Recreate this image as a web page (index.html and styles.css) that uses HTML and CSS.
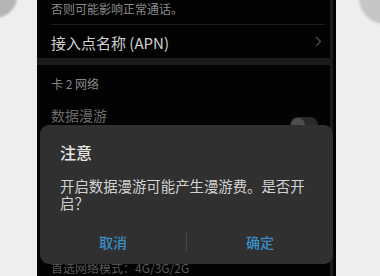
FILE: index.html
```html
<!DOCTYPE html>
<html lang="zh">
<head>
<meta charset="utf-8">
<link rel="stylesheet" href="styles.css">
</head>
<body>
<div class="page">
  <div class="blob blob-left"></div>
  <div class="blob blob-right"></div>
  <div class="gutter"></div>
  <div class="phone">
    <div class="screen">
      <div class="note">否则可能影响正常通话。</div>
      <div class="rule"></div>
      <div class="row apn">
        <span>接入点名称 (APN)</span>
        <svg class="chev" width="7" height="11" viewBox="0 0 7 11"><path d="M1 1 L5.5 5.5 L1 10" fill="none" stroke="#4a4a4a" stroke-width="1.4"/></svg>
      </div>
      <div class="band"></div>
      <div class="header">卡 2 网络</div>
      <div class="row roam">
        <span class="roam-label">数据漫游</span>
        <span class="toggle"><span class="knob"></span></span>
      </div>
      <div class="sub">首选网络模式：4G/3G/2G</div>
    </div>
    <div class="edge"></div>
    <div class="dialog">
      <div class="title">注意</div>
      <div class="message">开启数据漫游可能产生漫游费。是否开启？</div>
      <div class="actions">
        <div class="btn">取消</div>
        <div class="sep"></div>
        <div class="btn">确定</div>
      </div>
    </div>
  </div>
</div>
</body>
</html>
```

FILE: styles.css
```css
* { box-sizing: border-box; }
html, body { margin: 0; padding: 0; }
body {
  background: #efefef;
  font-family: "Noto Sans CJK SC", "Noto Sans", sans-serif;
}
.page {
  position: relative;
  display: flex;
  width: 380px;
  height: 276px;
  overflow: hidden;
  background: #eeeeee;
}
.blob {
  position: absolute;
  border-radius: 50%;
  filter: blur(1px);
}
.blob-left {
  left: -27px;
  top: -26px;
  width: 44px;
  height: 44px;
  background: #b4b4b4;
}
.blob-right {
  left: 359px;
  top: -28px;
  width: 52px;
  height: 52px;
  background: #c6c6c6;
}
.gutter { width: 37px; flex: none; }
.phone {
  position: relative;
  display: flex;
  width: 299px;
  flex: none;
  background: #030303;
}
.screen {
  width: 293px;
  flex: none;
  display: flex;
  flex-direction: column;
}
.edge {
  width: 3px;
  flex: none;
  background: #1b1b1b;
}
.note {
  height: 25px;
  line-height: 17px;
  padding-left: 14px;
  font-size: 12px;
  color: #8a8a8a;
  white-space: nowrap;
}
.rule {
  height: 1px;
  margin: 0 5px 0 14px;
  background: #1d1d1d;
}
.row {
  display: flex;
  justify-content: space-between;
  padding-left: 14px;
}
.apn {
  height: 36px;
  align-items: center;
  padding-top: 2px;
  padding-right: 8px;
  font-size: 15px;
  color: #d0d0d0;
}
.chev { flex: none; margin-top: -2px; }
.band {
  height: 7px;
  background: #1a1a1a;
}
.header {
  height: 38px;
  line-height: 38px;
  padding-left: 14px;
  font-size: 12px;
  color: #888888;
}
.roam {
  height: 30px;
  align-items: flex-start;
  padding-right: 12px;
}
.roam-label {
  line-height: 24px;
  font-size: 14px;
  color: #6a6a6a;
}
.toggle {
  margin-top: 14px;
  width: 28px;
  height: 16px;
  border-radius: 8px;
  background: #2a2a2a;
  display: flex;
  align-items: center;
  padding-left: 1px;
}
.knob {
  width: 14px;
  height: 14px;
  border-radius: 50%;
  background: #4e4e4e;
}
.sub {
  margin-top: 127px;
  line-height: 16px;
  padding-left: 14px;
  font-size: 12px;
  color: #585858;
  white-space: nowrap;
}
.dialog {
  position: absolute;
  left: 3px;
  top: 125px;
  width: 293px;
  height: 139px;
  border-radius: 9px;
  background: #303030;
  display: flex;
  flex-direction: column;
  padding: 17px 20px 3px 20px;
}
.title {
  line-height: 20px;
  font-size: 16px;
  font-weight: 500;
  color: #e6e6e6;
}
.message {
  margin-top: 15px;
  line-height: 17px;
  font-size: 14.4px;
  color: #d2d2d2;
}
.actions {
  margin: auto -20px 0 -20px;
  height: 39px;
  display: flex;
  align-items: center;
}
.btn {
  flex: 1;
  text-align: center;
  font-size: 14px;
  font-weight: 500;
  color: #3b8dc8;
}
.sep {
  width: 1px;
  height: 19px;
  background: #454545;
}
```
